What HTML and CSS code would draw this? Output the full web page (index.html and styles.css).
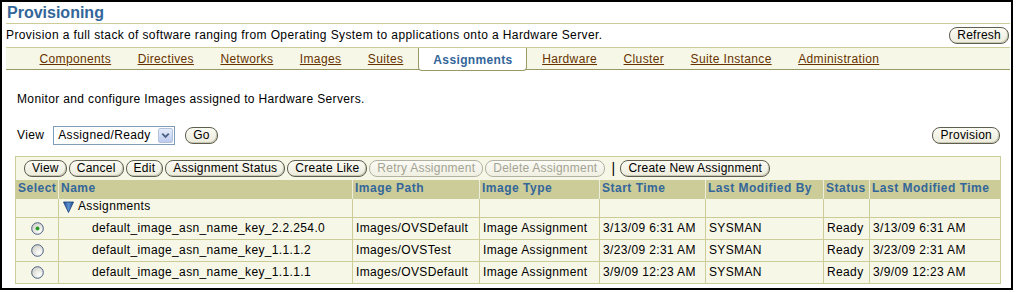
FILE: index.html
```html
<!DOCTYPE html>
<html>
<head>
<meta charset="utf-8">
<link rel="stylesheet" href="styles.css">
</head>
<body>
<div class="frame">
  <div class="header">
    <h1 class="title">Provisioning</h1>
    <div class="subhead">
      <span class="desc">Provision a full stack of software ranging from Operating System to applications onto a Hardware Server.</span>
      <button class="btn">Refresh</button>
    </div>
    <div class="tabs">
      <a class="tab" href="#">Components</a>
      <a class="tab" href="#">Directives</a>
      <a class="tab" href="#">Networks</a>
      <a class="tab" href="#">Images</a>
      <a class="tab" href="#">Suites</a>
      <span class="tab active">Assignments</span>
      <a class="tab" href="#">Hardware</a>
      <a class="tab" href="#">Cluster</a>
      <a class="tab" href="#">Suite Instance</a>
      <a class="tab" href="#">Administration</a>
    </div>
  </div>
  <div class="content">
    <p class="intro">Monitor and configure Images assigned to Hardware Servers.</p>
    <div class="viewbar">
      <span class="view-label">View</span>
      <div class="select">
        <span class="select-text">Assigned/Ready</span>
        <span class="select-arrow"><svg width="14" height="15" viewBox="0 0 14 15"><path d="M3.5 5.5 L7 9 L10.5 5.5" fill="none" stroke="#4d6185" stroke-width="2"/></svg></span>
      </div>
      <button class="btn">Go</button>
      <span class="spacer"></span>
      <button class="btn">Provision</button>
    </div>
    <table class="grid">
      <colgroup>
        <col class="c-select"><col class="c-name"><col class="c-path"><col class="c-type"><col class="c-start"><col class="c-by"><col class="c-status"><col class="c-time">
      </colgroup>
      <tr class="toolbar-row">
        <td colspan="8" class="toolbar">
          <button class="btn">View</button><button class="btn">Cancel</button><button class="btn">Edit</button><button class="btn">Assignment Status</button><button class="btn">Create Like</button><button class="btn" disabled>Retry Assignment</button><button class="btn" disabled>Delete Assignment</button><span class="sep">|</span><button class="btn">Create New Assignment</button>
        </td>
      </tr>
      <tr class="head">
        <th>Select</th><th>Name</th><th>Image Path</th><th>Image Type</th><th>Start Time</th><th>Last Modified By</th><th>Status</th><th>Last Modified Time</th>
      </tr>
      <tr class="group">
        <td></td>
        <td><span class="tree"><svg class="tri" width="11" height="12" viewBox="0 0 11 12"><defs><linearGradient id="tg" x1="0" y1="0" x2="1" y2="0"><stop offset="0" stop-color="#1d4f91"/><stop offset="0.5" stop-color="#5b8fd0"/><stop offset="1" stop-color="#1d4f91"/></linearGradient></defs><polygon points="0.5,1 10.5,1 5.5,11.5" fill="url(#tg)" stroke="#173f75" stroke-width="0.8"/></svg>Assignments</span></td>
        <td></td><td></td><td></td><td></td><td></td><td></td>
      </tr>
      <tr class="data">
        <td class="sel"><svg class="radio" width="13" height="13" viewBox="0 0 13 13"><defs><radialGradient id="rg1" cx="0.65" cy="0.7" r="0.7"><stop offset="0" stop-color="#ffffff"/><stop offset="1" stop-color="#d4d4cc"/></radialGradient></defs><circle cx="6.5" cy="6.5" r="5.8" fill="url(#rg1)" stroke="#4a5f80" stroke-width="1"/><circle cx="6.5" cy="6.5" r="2" fill="#2a9c2a"/></svg></td>
        <td class="nm">default_image_asn_name_key_2.2.254.0</td>
        <td>Images/OVSDefault</td><td>Image Assignment</td><td>3/13/09 6:31 AM</td><td>SYSMAN</td><td>Ready</td><td>3/13/09 6:31 AM</td>
      </tr>
      <tr class="data">
        <td class="sel"><svg class="radio" width="13" height="13" viewBox="0 0 13 13"><defs><radialGradient id="rg2" cx="0.65" cy="0.7" r="0.7"><stop offset="0" stop-color="#ffffff"/><stop offset="1" stop-color="#d4d4cc"/></radialGradient></defs><circle cx="6.5" cy="6.5" r="5.8" fill="url(#rg2)" stroke="#4a5f80" stroke-width="1"/></svg></td>
        <td class="nm">default_image_asn_name_key_1.1.1.2</td>
        <td>Images/OVSTest</td><td>Image Assignment</td><td>3/23/09 2:31 AM</td><td>SYSMAN</td><td>Ready</td><td>3/23/09 2:31 AM</td>
      </tr>
      <tr class="data">
        <td class="sel"><svg class="radio" width="13" height="13" viewBox="0 0 13 13"><defs><radialGradient id="rg3" cx="0.65" cy="0.7" r="0.7"><stop offset="0" stop-color="#ffffff"/><stop offset="1" stop-color="#d4d4cc"/></radialGradient></defs><circle cx="6.5" cy="6.5" r="5.8" fill="url(#rg3)" stroke="#4a5f80" stroke-width="1"/></svg></td>
        <td class="nm">default_image_asn_name_key_1.1.1.1</td>
        <td>Images/OVSDefault</td><td>Image Assignment</td><td>3/9/09 12:23 AM</td><td>SYSMAN</td><td>Ready</td><td>3/9/09 12:23 AM</td>
      </tr>
    </table>
  </div>
</div>
</body>
</html>
```

FILE: styles.css
```css
* { box-sizing: border-box; }
html, body { margin: 0; padding: 0; background: #fff; }
body {
  font-family: "Liberation Sans", Arial, sans-serif;
  font-size: 12px;
  letter-spacing: 0.36px;
  color: #000;
}
.frame {
  width: 1013px;
  height: 290px;
  border: 2px solid #000;
  overflow: hidden;
}
.header { padding: 0 1px 0 4px; }
.title {
  margin: 0;
  height: 22px;
  line-height: 21px;
  font-size: 16px;
  font-weight: bold;
  letter-spacing: 0;
  color: #336699;
  border-bottom: 1px solid #cccc99;
  padding-left: 1px;
}
.subhead {
  height: 23px;
  display: flex;
  align-items: center;
  justify-content: space-between;
  padding-bottom: 1px;
}
.desc { line-height: 14px; letter-spacing: 0.4px; }
.btn {
  font-family: "Liberation Sans", Arial, sans-serif;
  font-size: 12px;
  letter-spacing: 0.24px;
  color: #000;
  height: 17px;
  line-height: 15px;
  padding: 0 7px;
  border: 1px solid #5e5e50;
  border-radius: 8px;
  background: linear-gradient(#fbfbf4, #ecebdc);
  box-shadow: inset -1px -1px 0 #c9c8b4;
  margin: 0;
  cursor: default;
}
.btn:disabled {
  color: #a4a394;
  border-color: #b3b2a2;
  box-shadow: none;
  background: linear-gradient(#fbfbf6, #f0efe2);
}
.subhead .btn { margin-right: 1px; }
.tabs {
  display: flex;
  height: 23px;
  background: #f7f7e7;
  border-top: 1px solid #cccc99;
  border-bottom: 1px solid #999966;
  padding-left: 20px;
}
.tab {
  padding: 0 13px 0 13.5px;
  line-height: 22px;
  color: #663300;
  text-decoration: underline;
}
.tab.active {
  background: #fff;
  color: #336699;
  font-weight: bold;
  text-decoration: none;
  padding: 1px 13px 0 14px;
  height: 23px;
  border-left: 1px solid #999966;
  border-right: 1px solid #999966;
  border-bottom: 1px solid #999966;
  border-radius: 0 0 4px 4px;
  margin-left: 2px;
  margin-right: 2px;
}
.content { padding: 0 11px 0 13px; }
.intro {
  margin: 22px 0 0 2px;
  line-height: 15px;
}
.viewbar {
  display: flex;
  align-items: center;
  margin-top: 18px;
  height: 20px;
  padding-left: 2px;
}
.view-label { margin-right: 9px; }
.select {
  display: flex;
  align-items: center;
  height: 19px;
  width: 122px;
  border: 1px solid #7f9db9;
  background: #fff;
  padding: 1px 1px 1px 4px;
  justify-content: space-between;
}
.select-text { line-height: 15px; }
.select-arrow {
  width: 15px;
  height: 15px;
  border: 1px solid #b4c3dc;
  border-radius: 2px;
  background: linear-gradient(#e5ecfa, #bccbef);
  display: flex;
  align-items: center;
  justify-content: center;
}
.select-arrow svg { display: block; }
.viewbar .btn { margin-left: 10px; }
.spacer { flex: 1; }
.grid {
  margin-top: 11px;
  width: 985px;
  border-collapse: collapse;
  table-layout: fixed;
  border: 1px solid #cccc99;
}
.c-select { width: 43px; }
.c-name { width: 294px; }
.c-path { width: 127px; }
.c-type { width: 120px; }
.c-start { width: 106px; }
.c-by { width: 118px; }
.c-status { width: 46px; }
.c-time { width: 131px; }
.toolbar {
  background: #f7f7e7;
  height: 23px;
  padding: 3px 8px 2px 8px;
  white-space: nowrap;
}
.toolbar .btn { margin-right: 2px; vertical-align: top; }
.sep {
  display: inline-block;
  vertical-align: top;
  line-height: 17px;
  font-size: 14px;
  margin: 0 5px 0 4px;
}
.head th {
  background: #cccc99;
  color: #336699;
  font-weight: bold;
  letter-spacing: 0.5px;
  text-align: left;
  height: 19px;
  padding: 0 2px;
  line-height: 15px;
  border-left: 1px solid #eeeedd;
  white-space: nowrap;
  overflow: hidden;
}
.head th:first-child { border-left: none; }
.group td, .data td {
  background: #f7f7e7;
  border: 1px solid #cccc99;
  padding: 0 3px;
  line-height: 15px;
  white-space: nowrap;
  overflow: hidden;
}
.group td { height: 19px; }
.data td { height: 22px; }
.tree { display: inline-flex; align-items: center; padding-left: 1px; }
.tri { margin-right: 4px; display: block; }
.data .sel { text-align: center; padding: 0; }
.radio { display: block; margin: 0 auto; }
.data .nm { padding-left: 33px; }
```
